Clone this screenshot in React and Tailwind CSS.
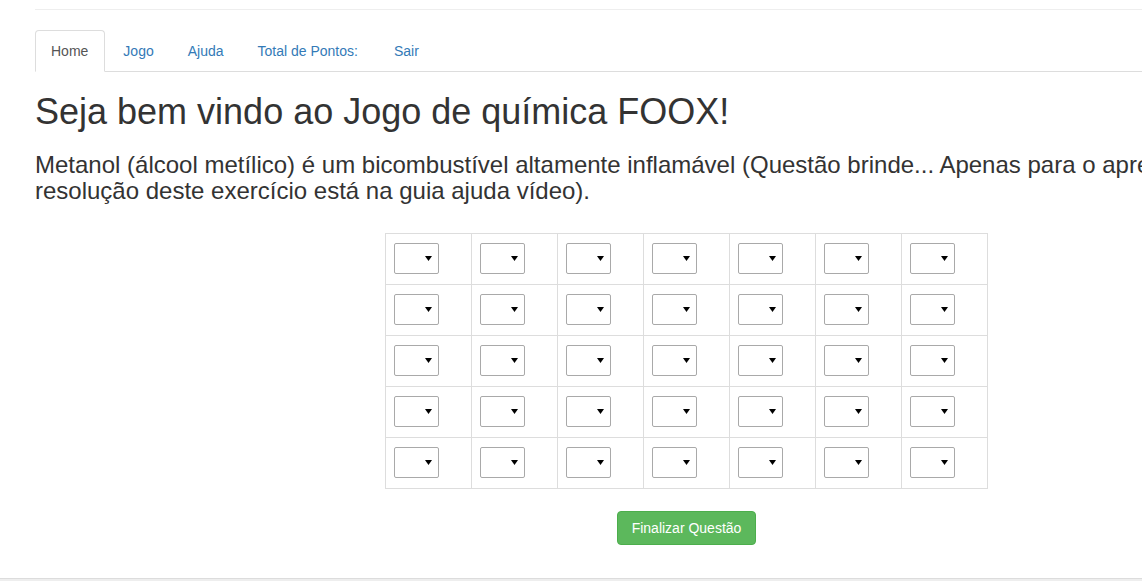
import React from "react";

function FakeSelect() {
  return (
    <div className="w-[45px] h-[31px] border border-[#a9a9a9] rounded-[2px] bg-white flex items-center justify-end pr-[6px]">
      <svg width="7" height="5" viewBox="0 0 7 5">
        <polygon points="0,0 7,0 3.5,5" fill="#000" />
      </svg>
    </div>
  );
}

export default function App() {
  const tabs = [
    { t: "Home", cls: "px-[15px] pr-[16px] border-[#ddd] border-b-transparent bg-white text-[#555]" },
    { t: "Jogo", cls: "px-[15px] border-transparent text-[#337ab7]" },
    { t: "Ajuda", cls: "px-[15px] border-transparent text-[#337ab7]" },
    { t: "Total de Pontos:", cls: "pl-[15px] pr-[17px] border-transparent text-[#337ab7]" },
    { t: "Sair", cls: "px-[15px] border-transparent text-[#337ab7]" },
  ];
  const rows = [0, 1, 2, 3, 4];
  const cols = [0, 1, 2, 3, 4, 5, 6];
  return (
    <div
      className="w-[1142px] h-[581px] overflow-hidden bg-white flex flex-col text-[#333]"
      style={{ fontFamily: '"Liberation Sans", Arial, Helvetica, sans-serif' }}
    >
      <div className="flex-1 pt-[9px] pl-[35px]">
        <div className="w-[1303px]">
          <div className="border-t border-[#eeeeee]" />
          <ul className="mt-[20px] flex border-b border-[#ddd] text-[14px] leading-[20px]">
            {tabs.map((x) => (
              <li key={x.t} className="-mb-px mr-[2px]">
                <a className={"block py-[10px] border rounded-t-[4px] " + x.cls}>{x.t}</a>
              </li>
            ))}
          </ul>
          <h1 className="mt-[20px] mb-[10px] text-[36px] leading-[40px] font-normal">
            Seja bem vindo ao Jogo de química FOOX!
          </h1>
          <h3 className="mt-[20px] mb-[10px] text-[24px] leading-[26px] font-normal whitespace-nowrap">
            Metanol (álcool metílico) é um bicombustível altamente inflamável (Questão brinde... Apenas para o aprendizado, a
            <br />
            resolução deste exercício está na guia ajuda vídeo).
          </h3>
          <div className="mt-[29px] flex flex-col items-center">
            <div className="border-l border-t border-[#dddddd] flex flex-col">
              {rows.map((r) => (
                <div key={r} className="flex">
                  {cols.map((c) => (
                    <div
                      key={c}
                      className="w-[86px] h-[51px] border-r border-b border-[#dddddd] pl-[8px] pt-[9px]"
                    >
                      <FakeSelect />
                    </div>
                  ))}
                </div>
              ))}
            </div>
            <button className="mt-[22px] h-[34px] px-[14px] border border-[#4cae4c] bg-[#5cb85c] text-white text-[14px] leading-[20px] rounded-[4px]">
              Finalizar Questão
            </button>
          </div>
        </div>
      </div>
      <div className="h-[3px] border-t border-[#dcdcdc] bg-[#eeeeee]" />
    </div>
  );
}
